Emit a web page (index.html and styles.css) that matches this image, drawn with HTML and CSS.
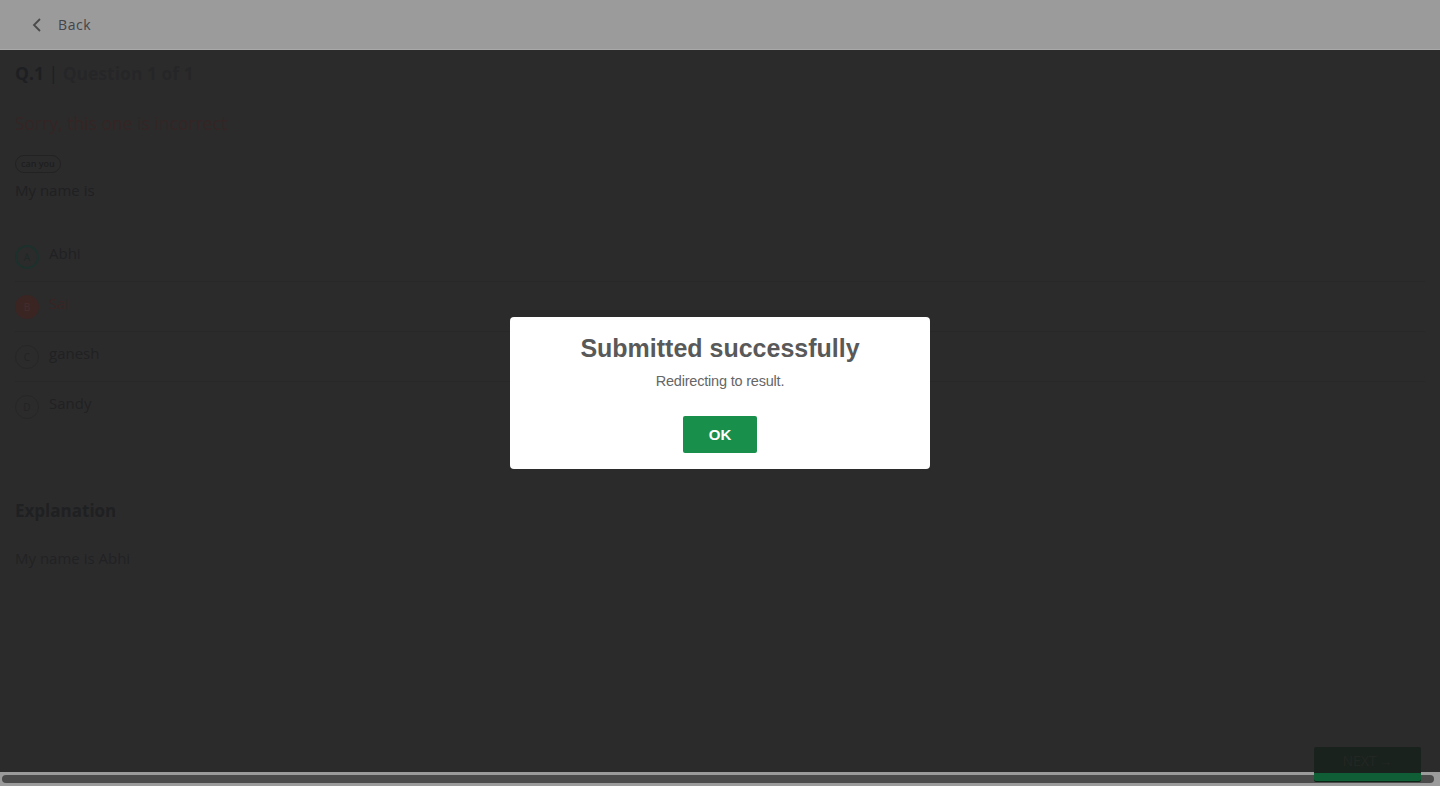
FILE: index.html
```html
<!DOCTYPE html>
<html lang="en">
<head>
<meta charset="utf-8">
<title>Quiz</title>
<link rel="stylesheet" href="styles.css">
</head>
<body>
<header class="topbar">
  <svg class="chev" width="12" height="16" viewBox="0 0 12 16"><path d="M9 2 L3 8 L9 14" fill="none" stroke="#4a4a4a" stroke-width="1.8"/></svg>
  <span class="back">Back</span>
</header>
<main class="content">
  <h2 class="qtitle"><span class="qnum">Q.1</span> <span class="sep">|</span> <span class="qof">Question 1 of 1</span></h2>
  <p class="wrong">Sorry, this one is incorrect</p>
  <span class="pill">can you</span>
  <p class="qtext">My name is</p>
  <ul class="options">
    <li class="opt"><span class="circ a">A</span><span class="otext">Abhi</span></li>
    <li class="opt"><span class="circ b">B</span><span class="otext red">Sai</span></li>
    <li class="opt"><span class="circ c">C</span><span class="otext">ganesh</span></li>
    <li class="opt last"><span class="circ c">D</span><span class="otext">Sandy</span></li>
  </ul>
  <h3 class="exp">Explanation</h3>
  <p class="exptext">My name is Abhi</p>
</main>
<div class="hscroll"><div class="thumb"></div></div>
<button class="next">NEXT<span class="arrow">&#8594;</span></button>
<div class="overlay">
  <div class="modal">
    <h1 class="mtitle">Submitted successfully</h1>
    <p class="msub">Redirecting to result.</p>
    <button class="ok">OK</button>
  </div>
</div>
</body>
</html>
```
FILE: styles.css
```css
* { box-sizing: border-box; }
html, body { margin: 0; padding: 0; height: 100%; }
body {
  background: #2b2b2b;
  font-family: "Open Sans", "Noto Sans", sans-serif;
  overflow: hidden;
  position: relative;
}
.topbar {
  height: 50px;
  background: #9b9b9b;
  border-bottom: 1px solid #a9a9a9;
  display: flex;
  align-items: center;
  padding-left: 31px;
}
.chev { margin-right: 15px; }
.back { color: #444449; font-size: 14px; letter-spacing: 0.6px; }
.content { padding: 0 15px; }
.qtitle {
  margin: 9px 0 0;
  font-size: 17.5px;
  font-weight: 700;
  line-height: 28px;
}
.qnum { color: #1e1f22; }
.sep { color: #1e1f22; font-weight: 400; }
.qof { color: #262628; }
.wrong {
  margin: 22px 0 0;
  font-size: 17.5px;
  line-height: 28px;
  color: #352525;
}
.pill {
  display: inline-block;
  margin-top: 18px;
  border: 1px solid #222224;
  border-radius: 9px;
  font-size: 9px;
  font-weight: 600;
  color: #1e1e20;
  padding: 0 5px;
  line-height: 16px;
}
.qtext {
  margin: 5px 0 0;
  font-size: 15px;
  line-height: 24px;
  color: #202022;
}
.options { list-style: none; margin: 30px 0 0; padding: 0; }
.opt {
  display: flex;
  align-items: flex-start;
  height: 50px;
  border-bottom: 1px solid #282828;
}
.opt.last { border-bottom: none; }
.circ {
  width: 24px; height: 24px;
  border-radius: 50%;
  display: flex; align-items: center; justify-content: center;
  font-size: 10px;
  margin-top: 13px;
  margin-right: 10px;
  color: #232323;
}
.circ.a { border: 2px solid #1c302c; color: #1e2826; }
.circ.b { background: #3a2523; color: #452d2b; }
.circ.c { border: 1.5px solid #262626; }
.otext { font-size: 15px; line-height: 24px; color: #212123; margin-top: 9px; }
.otext.red { color: #3a2424; }
.exp {
  margin: 65px 0 0;
  font-size: 17px;
  font-weight: 700;
  line-height: 28px;
  color: #1f2022;
}
.exptext {
  margin: 21px 0 0;
  font-size: 15px;
  line-height: 24px;
  color: #222224;
}
.hscroll {
  position: absolute;
  left: 0; right: 0; bottom: 0;
  height: 14px;
  background: #9b9b9b;
  padding: 3px 6px 3px 2px;
}
.thumb { height: 8px; background: #4a4a4a; border-radius: 4px; }
.next {
  position: absolute;
  left: 1314px; top: 747px;
  width: 107px; height: 34px;
  background: #1a221e;
  border: none;
  border-bottom: 8px solid #0f5e35;
  border-radius: 2px;
  color: #232724;
  font-family: "Open Sans", sans-serif;
  font-size: 14px;
  padding: 0;
  box-shadow: 0 1px 0 #0b2416;
}
.arrow { margin-left: 2px; }
.overlay {
  position: fixed;
  inset: 0;
  display: flex;
  align-items: center;
  justify-content: center;
}
.modal {
  width: 420px;
  height: 152px;
  background: #fff;
  border-radius: 4px;
  text-align: center;
  font-family: "Liberation Sans", Arial, sans-serif;
  padding-top: 16px;
}
.mtitle {
  margin: 0;
  font-size: 25px;
  font-weight: 700;
  color: #595959;
  line-height: 30px;
}
.msub {
  margin: 9px 0 0;
  font-size: 14.5px;
  color: #666;
  line-height: 18px;
  letter-spacing: -0.2px;
}
.ok {
  margin-top: 26px;
  width: 74px;
  height: 37px;
  background: #198f4c;
  border: none;
  border-radius: 2px;
  color: #fff;
  font-family: "Liberation Sans", Arial, sans-serif;
  font-weight: 700;
  font-size: 15px;
}
```
